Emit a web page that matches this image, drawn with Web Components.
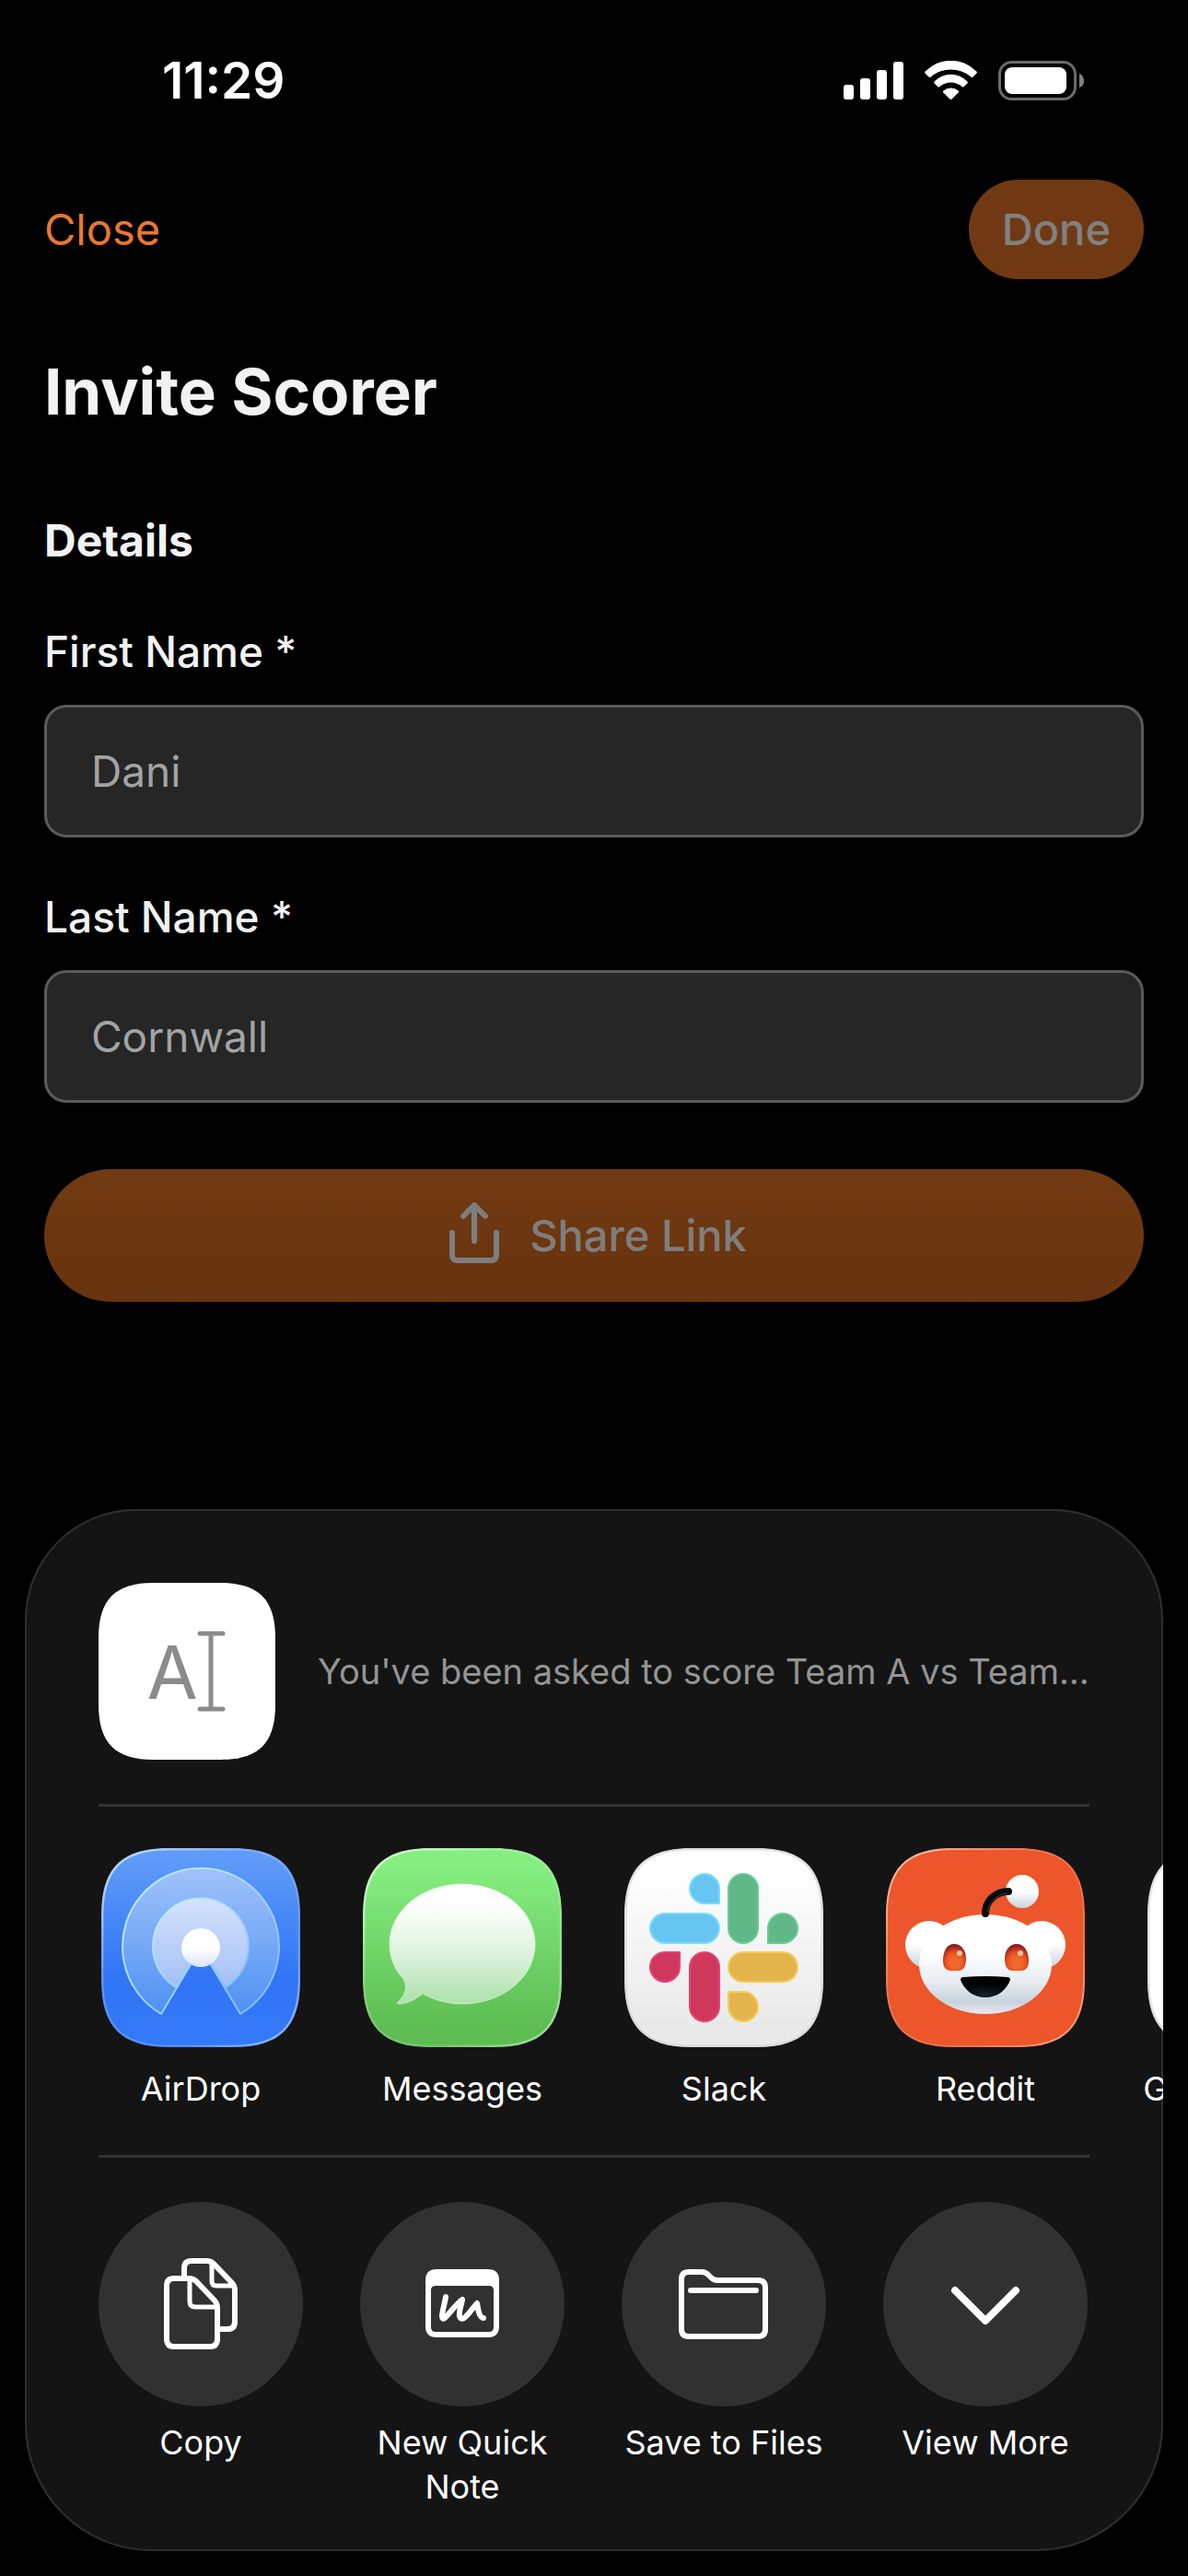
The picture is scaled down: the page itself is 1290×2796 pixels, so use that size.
<!DOCTYPE html>
<html lang="en">
<head>
<meta charset="utf-8">
<meta name="viewport" content="width=device-width, initial-scale=1">
<title>Invite Scorer</title>
<style>
  body{
    margin: 0;
    background: #000;
    color: #f2f2f2;
    font-family: Inter, "Liberation Sans", sans-serif;
    font-size: 48px;
    line-height: 60px;
  }
  .defs{
    position: absolute;
  }
</style>
</head>
<body>

<!-- shared tile shape and gradients for the app icons -->
<svg class="defs" width="0" height="0" aria-hidden="true">
  <defs>
    <path id="tile" d="M0 72C0 22 22 0 72 0H144C194 0 216 22 216 72V144C216 194 194 216 144 216H72C22 216 0 194 0 144Z"/>
    <clipPath id="tile-clip"><use href="#tile"/></clipPath>
    <linearGradient id="rim" x1="0" y1="0" x2="1" y2="1">
      <stop offset="0.1" stop-color="#fff" stop-opacity="0.55"/>
      <stop offset="0.35" stop-color="#fff" stop-opacity="0.2"/>
      <stop offset="0.7" stop-color="#fff" stop-opacity="0.15"/>
      <stop offset="0.9" stop-color="#fff" stop-opacity="0.4"/>
    </linearGradient>
    <linearGradient id="blue" x1="0" y1="0" x2="0" y2="1">
      <stop offset="0.05" stop-color="#5f9bf8"/>
      <stop offset="0.65" stop-color="#3075f5"/>
      <stop offset="1" stop-color="#3479f7"/>
    </linearGradient>
    <linearGradient id="wave-outer" x1="0" y1="0" x2="0" y2="1">
      <stop offset="0" stop-color="#a0c2fa"/>
      <stop offset="1" stop-color="#4e91f2"/>
    </linearGradient>
    <linearGradient id="wave-inner" x1="0" y1="0" x2="0" y2="1">
      <stop offset="0" stop-color="#d5e2fc"/>
      <stop offset="1" stop-color="#a3c0f6"/>
    </linearGradient>
    <linearGradient id="wave-rim" x1="0" y1="0" x2="1" y2="1">
      <stop offset="0" stop-color="#c4f6ff"/>
      <stop offset="1" stop-color="#7fb6fb"/>
    </linearGradient>
    <linearGradient id="dot" x1="0" y1="0" x2="0" y2="1">
      <stop offset="0.5" stop-color="#fff"/>
      <stop offset="1" stop-color="#d9e5fb"/>
    </linearGradient>
    <linearGradient id="green" x1="0" y1="0" x2="0" y2="1">
      <stop offset="0.1" stop-color="#85ee80"/>
      <stop offset="0.9" stop-color="#5dbd52"/>
    </linearGradient>
    <linearGradient id="bubble" x1="0" y1="0" x2="0" y2="1">
      <stop offset="0.15" stop-color="#fff"/>
      <stop offset="0.6" stop-color="#dcf2db"/>
      <stop offset="0.95" stop-color="#b2e3b1"/>
    </linearGradient>
    <linearGradient id="paper" x1="0" y1="0" x2="0" y2="1">
      <stop offset="0.1" stop-color="#fff"/>
      <stop offset="0.9" stop-color="#e9e9e9"/>
    </linearGradient>
    <linearGradient id="head" x1="0" y1="0" x2="0" y2="1">
      <stop offset="0.4" stop-color="#fff"/>
      <stop offset="0.68" stop-color="#e6ecf0"/>
      <stop offset="0.88" stop-color="#c8d2dd"/>
      <stop offset="1" stop-color="#eee6f0"/>
    </linearGradient>
    <linearGradient id="ear" x1="0" y1="0" x2="0" y2="1">
      <stop offset="0.5" stop-color="#fff"/>
      <stop offset="1" stop-color="#c6d2da"/>
    </linearGradient>
    <radialGradient id="eye" cx="0.5" cy="0.7" r="0.65">
      <stop offset="0.3" stop-color="#ef6a2a"/>
      <stop offset="0.6" stop-color="#ec5020"/>
      <stop offset="1" stop-color="#8a1a26"/>
    </radialGradient>
    <radialGradient id="mouth" cx="0.5" cy="0.9" r="0.6">
      <stop offset="0" stop-color="#16222a"/>
      <stop offset="1" stop-color="#000"/>
    </radialGradient>
  </defs>
</svg>

<invite-page>
  <status-bar slot="status">11:29</status-bar>
  <nav-bar slot="nav"></nav-bar>

  <h1 slot="title">Invite Scorer</h1>
  <h2 slot="section">Details</h2>
  <form-field label="First Name *" value="Dani"></form-field>
  <form-field label="Last Name *" value="Cornwall"></form-field>
  <share-button slot="submit">Share Link</share-button>

  <share-sheet slot="sheet">
    <span slot="message">You've been asked to score Team A vs Team...</span>

    <share-item slot="app">
      <svg slot="icon" width="216" height="216" viewBox="0 0 216 216" aria-hidden="true">
        <g clip-path="url(#tile-clip)">
          <use href="#tile" fill="url(#blue)"/>
          <path d="M108 108L65 180A85 85 0 1 1 151 180Z" fill="url(#wave-outer)" stroke="url(#wave-rim)" stroke-width="2" stroke-linejoin="round"/>
          <path d="M108 108L81 151A52 52 0 1 1 135 151Z" fill="url(#wave-inner)" stroke="url(#wave-rim)" stroke-width="2" stroke-linejoin="round"/>
          <circle cx="108" cy="108" r="21" fill="url(#dot)"/>
          <use href="#tile" fill="none" stroke="url(#rim)" stroke-width="5"/>
        </g>
      </svg>
      AirDrop
    </share-item>

    <share-item slot="app">
      <svg slot="icon" width="216" height="216" viewBox="0 0 216 216" aria-hidden="true">
        <g clip-path="url(#tile-clip)">
          <use href="#tile" fill="url(#green)"/>
          <path d="M108 39C152 39 187 68 187 104S152 169 108 169C92 169 78 165 65 158C57 164 48 169 39 169C37 169 37 167 39 166C46 160 49 149 44 142C34 131 29 118 29 104C29 68 64 39 108 39Z" fill="url(#bubble)" stroke="#e6ffe6" stroke-opacity="0.6" stroke-width="1"/>
          <use href="#tile" fill="none" stroke="url(#rim)" stroke-width="5"/>
        </g>
      </svg>
      Messages
    </share-item>

    <share-item slot="app">
      <svg slot="icon" width="216" height="216" viewBox="0 0 216 216" aria-hidden="true">
        <g clip-path="url(#tile-clip)">
          <use href="#tile" fill="url(#paper)"/>
          <g fill="#66c6f1" stroke="#7bdcfd" stroke-width="2">
            <path d="M103 60H87A16 16 0 1 1 103 44Z"/>
            <rect x="28" y="71" width="75" height="32" rx="16"/>
          </g>
          <g fill="#60b787" stroke="#66cd94" stroke-width="2">
            <rect x="113" y="28" width="32" height="75" rx="16"/>
            <path d="M156 103V87A16 16 0 1 1 172 103Z"/>
          </g>
          <g fill="#cf375f" stroke="#e34473" stroke-width="2">
            <path d="M60 113V129A16 16 0 1 1 44 113Z"/>
            <rect x="71" y="113" width="32" height="75" rx="16"/>
          </g>
          <g fill="#e3b54c" stroke="#f5cc5b" stroke-width="2">
            <rect x="113" y="113" width="75" height="32" rx="16"/>
            <path d="M113 156H129A16 16 0 1 1 113 172Z"/>
          </g>
          <use href="#tile" fill="none" stroke="#d4d4d4" stroke-opacity="0.7" stroke-width="5"/>
        </g>
      </svg>
      Slack
    </share-item>

    <share-item slot="app">
      <svg slot="icon" width="216" height="216" viewBox="0 0 216 216" aria-hidden="true">
        <g clip-path="url(#tile-clip)">
          <use href="#tile" fill="#ec562a"/>
          <circle cx="148" cy="47" r="18" fill="url(#ear)"/>
          <circle cx="47" cy="105" r="26" fill="url(#ear)"/>
          <circle cx="169" cy="105" r="26" fill="url(#ear)"/>
          <ellipse cx="108" cy="126" rx="72" ry="54" fill="url(#head)"/>
          <path d="M108 71C108 57 119 47 133 47" fill="none" stroke="#06090b" stroke-width="8" stroke-linecap="round"/>
          <path d="M110 70C111 59 120 50 132 49" fill="none" stroke="#33434c" stroke-width="1"/>
          <path d="M74 104C82 104 87 111 87 120C87 128 84 133 79 133H70C65 133 62 129 62 122C62 112 66 104 74 104Z" fill="url(#eye)"/>
          <path d="M142 104C134 104 129 111 129 120C129 128 132 133 137 133H147C152 133 155 129 155 122C155 112 150 104 142 104Z" fill="url(#eye)"/>
          <circle cx="80" cy="114" r="3" fill="#ffc39c"/>
          <circle cx="146" cy="114" r="3" fill="#ffc39c"/>
          <path d="M81 143C81 141 82 140 84 140Q108 138 132 140C134 140 135 141 135 143C131 154 121 162 108 162S85 154 81 143Z" fill="url(#mouth)"/>
          <use href="#tile" fill="none" stroke="url(#rim)" stroke-width="4"/>
        </g>
      </svg>
      Reddit
    </share-item>

    <share-item slot="app">
      <svg slot="icon" width="216" height="216" viewBox="0 0 216 216" aria-hidden="true">
        <g clip-path="url(#tile-clip)">
          <use href="#tile" fill="#fff"/>
          <use href="#tile" fill="none" stroke="#d4d4d4" stroke-opacity="0.7" stroke-width="5"/>
        </g>
      </svg>
      Google Maps
    </share-item>

    <share-item slot="action" round>
      <svg slot="icon" width="222" height="222" viewBox="0 0 222 222" fill="none" stroke="#fff" stroke-width="6" stroke-linejoin="round" aria-hidden="true">
        <path d="M82 83H98Q103 83 106 86L126 107Q129 110 129 115V149Q129 157 121 157H82Q74 157 74 149V91Q74 83 82 83Z"/>
        <path d="M99 84V108Q99 114 105 114H128" stroke-width="5"/>
        <path d="M93 81V72Q93 64 101 64H117Q122 64 125 67L145 88Q148 91 148 96V130Q148 138 140 138H131"/>
        <path d="M123 65V86Q123 91 128 91H147" stroke-width="5"/>
      </svg>
      Copy
    </share-item>

    <share-item slot="action" round>
      <svg slot="icon" width="222" height="222" viewBox="0 0 222 222" fill="none" aria-hidden="true">
        <path fill="#fff" fill-rule="evenodd" d="M83 73H139Q151 73 151 85V135Q151 147 139 147H83Q71 147 71 135V85Q71 73 83 73ZM82 91Q77 91 77 96V136Q77 141 82 141H140Q145 141 145 136V96Q145 91 140 91Z"/>
        <path d="M93 103C92 110 89 119 89 124Q89 128 92 126C98 120 105 110 111 106C110 112 107 119 108 124Q109 128 113 126C119 121 123 114 127 110C128 115 129 126 134 126" stroke="#fff" stroke-width="6" stroke-linecap="round" stroke-linejoin="round"/>
      </svg>
      New Quick Note
    </share-item>

    <share-item slot="action" round>
      <svg slot="icon" width="222" height="222" viewBox="0 0 222 222" fill="none" stroke="#fff" stroke-width="6" stroke-linecap="round" stroke-linejoin="round" aria-hidden="true">
        <path d="M65 84Q65 76 73 76H87Q91 76 94 79L97 82Q100 85 104 85H148Q156 85 156 93V138Q156 146 148 146H73Q65 146 65 138Z"/>
        <path d="M75 96H146"/>
      </svg>
      Save to Files
    </share-item>

    <share-item slot="action" round>
      <svg slot="icon" width="222" height="222" viewBox="0 0 222 222" fill="none" stroke="#fff" stroke-width="8" stroke-linecap="round" stroke-linejoin="round" aria-hidden="true">
        <path d="M78 96L111 129L144 96"/>
      </svg>
      View More
    </share-item>
  </share-sheet>
</invite-page>

<template id="invite-page">
  <style>
    :host{
      display: flex;
      flex-direction: column;
      min-height: 100vh;
    }
    main{
      display: flex;
      flex-direction: column;
      padding: 82px 48px;
    }
    .fields{
      display: flex;
      flex-direction: column;
      gap: 56px;
      margin-bottom: 72px;
    }
    ::slotted(h1){
      margin: 0 0 92px;
      font-size: 69px;
      font-weight: 700;
      line-height: 80px;
    }
    ::slotted(h2){
      margin: 0 0 60px;
      font-size: 48px;
      font-weight: 700;
    }
    ::slotted([slot="sheet"]){
      margin: auto 27px 27px;
    }
  </style>
  <slot name="status"></slot>
  <slot name="nav"></slot>
  <main>
    <slot name="title"></slot>
    <slot name="section"></slot>
    <div class="fields"><slot></slot></div>
    <slot name="submit"></slot>
  </main>
  <slot name="sheet"></slot>
</template>

<template id="status-bar">
  <style>
    :host{
      display: flex;
      align-items: center;
      justify-content: space-between;
      height: 174px;
      padding: 0 112px 0 176px;
      color: #fff;
      font-size: 55px;
      font-weight: 600;
    }
    .icons{
      display: flex;
      align-items: center;
      gap: 23px;
    }
    svg{
      display: block;
    }
  </style>
  <time><slot></slot></time>
  <div class="icons">
    <svg width="65" height="42" viewBox="0 0 65 42" fill="#fff" aria-hidden="true">
      <rect x="0" y="26" width="11" height="16" rx="3"/>
      <rect x="18" y="19" width="11" height="23" rx="3"/>
      <rect x="36" y="10" width="11" height="32" rx="3"/>
      <rect x="54" y="1" width="11" height="41" rx="3"/>
    </svg>
    <svg width="57" height="42" viewBox="0 0 57 42" fill="#fff" aria-hidden="true">
      <path d="M0.7 11.5A38.7 38.7 0 0 1 56.3 11.5Q57.4 12.6 56.3 13.7L52.5 17.5Q51.5 18.4 50.4 17.4A33.9 33.9 0 0 0 6.6 17.4Q5.5 18.4 4.5 17.5L0.7 13.7Q-0.4 12.6 0.7 11.5Z"/>
      <path d="M10.6 22.6A24.5 24.5 0 0 1 46.4 22.6Q47.4 23.6 46.4 24.6L42.8 28Q41.8 29 40.6 28A18.4 18.4 0 0 0 16.4 28Q15.2 29 14.2 28L10.6 24.6Q9.6 23.6 10.6 22.6Z"/>
      <path d="M20.4 32.6A12.4 12.4 0 0 1 36.6 32.6Q37.6 33.6 36.6 34.6L29.6 41.5Q28.5 42.4 27.4 41.5L20.4 34.6Q19.4 33.6 20.4 32.6Z"/>
    </svg>
    <svg width="94" height="43" viewBox="0 0 94 43" aria-hidden="true">
      <rect x="1.5" y="1.5" width="82" height="40" rx="13" fill="none" stroke="#6b6b6b" stroke-width="3"/>
      <rect x="7" y="7" width="67" height="29" rx="8" fill="#fff"/>
      <path d="M88 14C91 15 93 18 93 22S91 28 88 29Z" fill="#808080"/>
    </svg>
  </div>
</template>

<template id="nav-bar">
  <style>
    :host{
      display: flex;
      align-items: center;
      justify-content: space-between;
      padding: 21px 48px 0;
    }
    button{
      height: 108px;
      padding: 0;
      border: 0;
      background: none;
      color: #e8792e;
      font: inherit;
      font-size: 47px;
      cursor: pointer;
    }
    .done{
      padding: 0 36px;
      border-radius: 54px;
      background: #703913;
      color: #808080;
      font-weight: 500;
    }
  </style>
  <button type="button">Close</button>
  <button type="button" class="done" disabled>Done</button>
</template>

<template id="form-field">
  <style>
    :host{
      display: flex;
      flex-direction: column;
      gap: 28px;
    }
    label{
      font-size: 46px;
      font-weight: 500;
    }
    input{
      box-sizing: border-box;
      width: 100%;
      height: 144px;
      padding: 0 48px;
      border: 3px solid #5a5a5a;
      border-radius: 24px;
      outline: none;
      background: #262626;
      color: #a3a3a3;
      font: inherit;
      font-size: 46px;
    }
  </style>
  <label for="field"></label>
  <input id="field" type="text">
</template>

<template id="share-button">
  <style>
    :host{
      display: block;
    }
    button{
      display: flex;
      align-items: center;
      justify-content: center;
      gap: 33px;
      width: 100%;
      height: 144px;
      padding: 0 36px 0 45px;
      border: 0;
      border-radius: 72px;
      background: linear-gradient(#713a12, #68330f);
      color: #7e7e7e;
      font: inherit;
      font-size: 47px;
      font-weight: 500;
    }
  </style>
  <button type="button" disabled>
    <svg width="54" height="72" viewBox="0 0 54 72" fill="none" stroke="currentColor" stroke-width="6" stroke-linecap="round" stroke-linejoin="round" aria-hidden="true">
      <path d="M3 33V57Q3 63 9 63H45Q51 63 51 57V33"/>
      <path d="M27 42V4M15 15L27 3L39 15"/>
    </svg>
    <slot></slot>
  </button>
</template>

<template id="share-sheet">
  <style>
    :host{
      display: block;
      overflow: hidden;
      padding: 80px 80px 46px;
      border-radius: 120px 120px 138px 138px;
      background: #141414;
      box-shadow: inset 0 0 0 2px #2e2f2e;
      color: #fff;
    }
    header{
      display: flex;
      align-items: center;
      gap: 46px;
    }
    .thumb{
      display: block;
      flex: none;
    }
    p{
      margin: 0;
      min-width: 0;
      color: #949494;
      font-size: 38px;
      line-height: 48px;
      white-space: nowrap;
    }
    hr{
      height: 3px;
      margin: 48px 0 45px;
      border: 0;
      background: #333434;
    }
    hr.low{
      margin: 48px 0;
    }
    .row{
      display: flex;
      gap: 62px;
    }
  </style>
  <header>
    <svg class="thumb" width="192" height="192" viewBox="0 0 192 192" aria-hidden="true">
      <path fill="#fff" d="M0 60C0 18 18 0 60 0H132C174 0 192 18 192 60V132C192 174 174 192 132 192H60C18 192 0 174 0 132Z"/>
      <text x="80" y="126" font-size="80" fill="#8b8b8b" text-anchor="middle">A</text>
      <path d="M122 55V137M110 55H135M110 137H135" fill="none" stroke="#8b8b8b" stroke-width="5" stroke-linecap="round"/>
    </svg>
    <p><slot name="message"></slot></p>
  </header>
  <hr>
  <div class="row"><slot name="app"></slot></div>
  <hr class="low">
  <div class="row"><slot name="action"></slot></div>
</template>

<template id="share-item">
  <style>
    :host{
      display: block;
      flex: none;
      width: 222px;
    }
    button{
      display: flex;
      flex-direction: column;
      align-items: center;
      gap: 21px;
      width: 100%;
      padding: 0;
      border: 0;
      background: none;
      color: inherit;
      font: inherit;
      font-size: 36px;
      line-height: 48px;
      white-space: nowrap;
      cursor: pointer;
    }
    ::slotted(svg){
      display: block;
    }
    :host([round]) button{
      gap: 15px;
      white-space: normal;
    }
    :host([round]) .icon{
      border-radius: 50%;
      background: #313131;
    }
  </style>
  <button type="button">
    <span class="icon"><slot name="icon"></slot></span>
    <span><slot></slot></span>
  </button>
</template>

<script>
class TemplateElement extends HTMLElement {
  constructor() {
    super();
    // Create a shadow root from the template of the same name
    const shadow = this.attachShadow({mode: 'open'});
    const tpl = document.getElementById(this.localName).content;
    shadow.appendChild(tpl.cloneNode(true));
  }
}

class FormField extends TemplateElement {
  static get observedAttributes() {
    return ['label', 'value'];
  }
  attributeChangedCallback(attrName, oldValue, newValue) {
    if(attrName === 'label'){
      this.shadowRoot.querySelector('label').textContent = newValue;
    }else{
      this.shadowRoot.querySelector('input').value = newValue;
    }
  }
}

customElements.define('invite-page', class extends TemplateElement {});
customElements.define('status-bar', class extends TemplateElement {});
customElements.define('nav-bar', class extends TemplateElement {});
customElements.define('form-field', FormField);
customElements.define('share-button', class extends TemplateElement {});
customElements.define('share-sheet', class extends TemplateElement {});
customElements.define('share-item', class extends TemplateElement {});
</script>
</body>
</html>
